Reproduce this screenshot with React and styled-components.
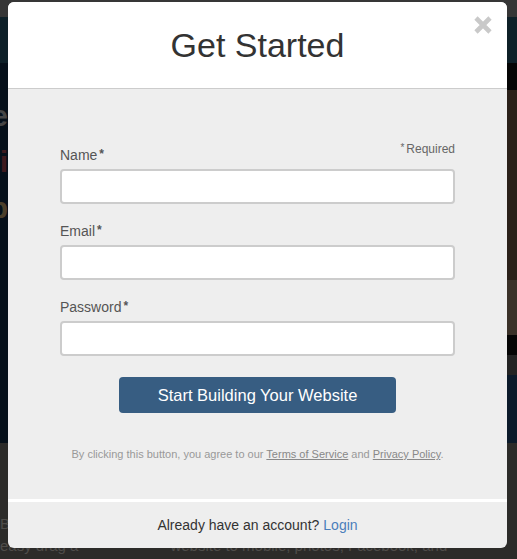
import React from 'react';
import styled, { createGlobalStyle } from 'styled-components';

const Global = createGlobalStyle`
  html, body { margin: 0; padding: 0; }
  body { font-family: "Liberation Sans", Arial, sans-serif; background: #2c2b29; }
  * { box-sizing: border-box; }
`;

const Page = styled.div`
  position: relative;
  width: 517px;
  height: 559px;
  overflow: hidden;
  display: flex;
  flex-direction: column;
`;

const TopBar = styled.div`
  flex: none;
  height: 17px;
  background: #363636;
`;

const NavBar = styled.div`
  flex: none;
  height: 46px;
  background: #0e2028;
`;

const Hero = styled.div`
  flex: none;
  height: 380px;
  background: #06101a;
  display: flex;
  justify-content: space-between;
`;

const HeroText = styled.div`
  width: 8px;
  overflow: hidden;
  display: flex;
  flex-direction: column;
  align-items: flex-end;
  padding-top: 30px;
`;

const HeroWord = styled.span`
  font-size: 30px;
  font-weight: bold;
  line-height: 46px;
  white-space: nowrap;
  color: ${p => p.$c};
`;

const HeroShot = styled.div`
  width: 12px;
  background: linear-gradient(
    to bottom,
    #050505 0 27px,
    #2a2119 27px 217px,
    #3a3128 217px 272px,
    #050505 272px 292px,
    #232323 292px 312px,
    #0b1a2a 312px 380px
  );
`;

const Lower = styled.div`
  flex: 1;
  background: #2c2b29;
  display: flex;
  gap: 92px;
  padding-top: 70px;
`;

const LowerCol = styled.div`
  display: flex;
  flex-direction: column;
  font-size: 15px;
  line-height: 22px;
  color: #4f4d4a;
  white-space: nowrap;
`;

const Modal = styled.div`
  position: absolute;
  left: 8px;
  top: 2px;
  width: 499px;
  border-radius: 6px;
  overflow: hidden;
  background: #eeeeee;
  display: flex;
  flex-direction: column;
`;

const Header = styled.header`
  position: relative;
  height: 87px;
  background: #ffffff;
  border-bottom: 1px solid #cccccc;
  display: flex;
  align-items: center;
  justify-content: center;
`;

const Title = styled.h1`
  margin: 0;
  font-size: 34px;
  font-weight: normal;
  color: #333333;
  line-height: 40px;
`;

const Close = styled.button`
  position: absolute;
  top: 14px;
  right: 15px;
  width: 18px;
  height: 18px;
  padding: 0;
  border: 0;
  background: none;
  cursor: pointer;
  display: flex;
`;

const Body = styled.div`
  height: 410px;
  padding: 58px 52px 0;
  display: flex;
  flex-direction: column;
`;

const Field = styled.div`
  display: flex;
  flex-direction: column;
  margin-bottom: 19px;
`;

const LabelRow = styled.div`
  display: flex;
  justify-content: space-between;
  align-items: flex-start;
  height: 17px;
`;

const Label = styled.label`
  font-size: 14px;
  line-height: 17px;
  color: #555555;
`;

const Star = styled.span`
  font-weight: bold;
  font-size: 12px;
  line-height: 0;
  margin-left: 2px;
  vertical-align: 2px;
  color: #555555;
`;

const Required = styled.span`
  font-size: 12px;
  line-height: 14px;
  margin-top: -5px;
  color: #666666;
`;

const ReqStar = styled.span`
  font-size: 10px;
  line-height: 0;
  margin-right: 2px;
  vertical-align: 2px;
`;

const Input = styled.input`
  margin-top: 5px;
  height: 35px;
  width: 100%;
  background: #ffffff;
  border: 2px solid #cccccc;
  border-radius: 4px;
  font: inherit;
  padding: 0 8px;
  outline: none;
`;

const Submit = styled.button`
  align-self: center;
  margin-top: 2px;
  width: 277px;
  height: 36px;
  border: 0;
  border-radius: 4px;
  background: #375d82;
  color: #ffffff;
  font-family: "Liberation Sans", Arial, sans-serif;
  font-size: 16.5px;
  cursor: pointer;
`;

const Terms = styled.p`
  margin: 34px 0 0;
  text-align: center;
  font-size: 11px;
  line-height: 15px;
  color: #999999;
`;

const TermsLink = styled.a`
  color: #888888;
  text-decoration: underline;
`;

const Footer = styled.footer`
  height: 49px;
  border-top: 3px solid #ffffff;
  display: flex;
  align-items: center;
  justify-content: center;
  font-size: 14px;
  color: #333333;
`;

const LoginLink = styled.a`
  color: #4a7ebb;
  text-decoration: none;
  margin-left: 4px;
`;

const fields = [
  { id: 'name', label: 'Name', type: 'text', required: true },
  { id: 'email', label: 'Email', type: 'email' },
  { id: 'password', label: 'Password', type: 'password' },
];

export default function App() {
  return (
    <>
      <Global />
      <Page>
        <TopBar />
        <NavBar />
        <Hero>
          <HeroText>
            <HeroWord $c="#464646">Create</HeroWord>
            <HeroWord $c="#3f1a1e">Edi</HeroWord>
            <HeroWord $c="#4b3f2a">Ap</HeroWord>
          </HeroText>
          <HeroShot />
        </Hero>
        <Lower>
          <LowerCol>
            <span>Bui</span>
            <span>easy drag a</span>
          </LowerCol>
          <LowerCol>
            <span>&nbsp;</span>
            <span>website to mobile, photos, Facebook, and</span>
          </LowerCol>
        </Lower>

        <Modal>
          <Header>
            <Title>Get Started</Title>
            <Close aria-label="Close">
              <svg width="18" height="18" viewBox="0 0 18 18">
                <path d="M2 2 L16 16 M16 2 L2 16" stroke="#c9c9c9" strokeWidth="4.6" />
              </svg>
            </Close>
          </Header>
          <Body>
            {fields.map(f => (
              <Field key={f.id}>
                <LabelRow>
                  <Label htmlFor={f.id}>
                    {f.label}
                    <Star>*</Star>
                  </Label>
                  {f.required && (
                    <Required>
                      <ReqStar>*</ReqStar>Required
                    </Required>
                  )}
                </LabelRow>
                <Input id={f.id} type={f.type} />
              </Field>
            ))}
            <Submit>Start Building Your Website</Submit>
            <Terms>
              By clicking this button, you agree to our <TermsLink href="#">Terms of Service</TermsLink> and{' '}
              <TermsLink href="#">Privacy Policy</TermsLink>.
            </Terms>
          </Body>
          <Footer>
            Already have an account?<LoginLink href="#">Login</LoginLink>
          </Footer>
        </Modal>
      </Page>
    </>
  );
}
